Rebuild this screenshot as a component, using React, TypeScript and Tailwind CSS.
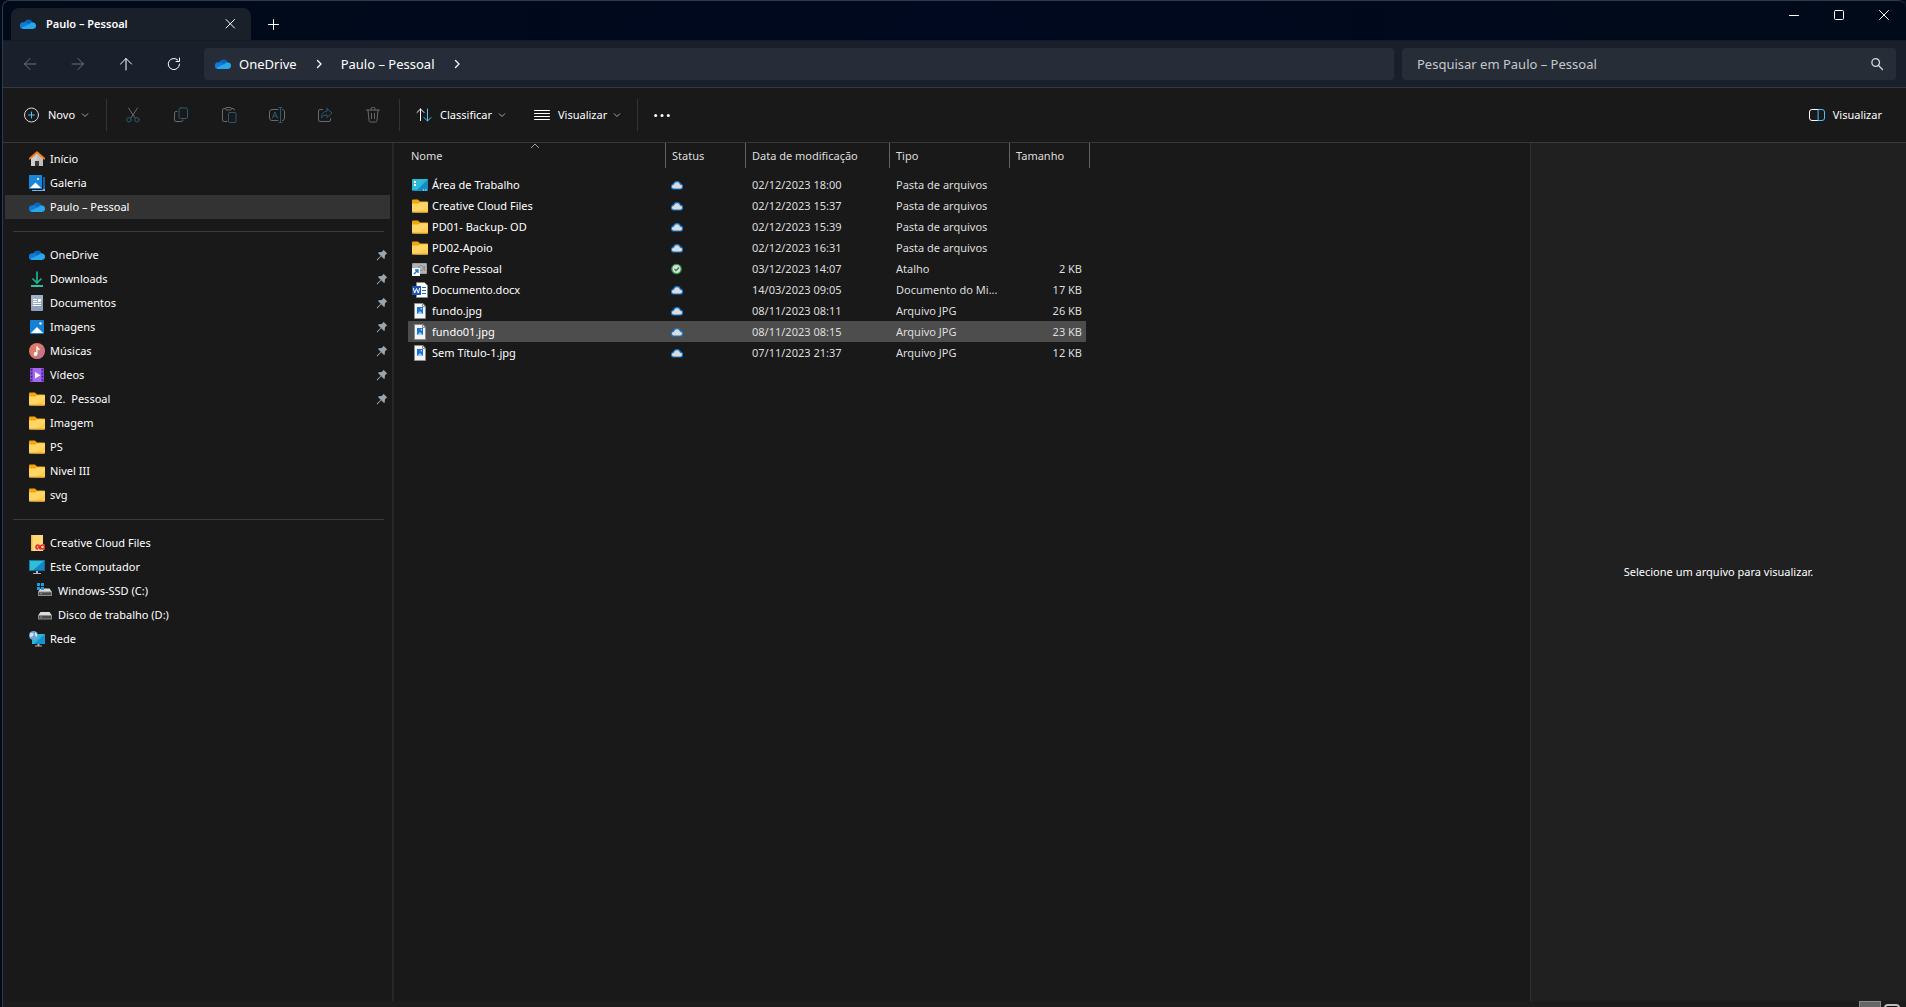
import type { ReactNode } from 'react'

type IconName =
  | 'home' | 'gallery' | 'cloud' | 'download' | 'document' | 'image' | 'music' | 'video'
  | 'folder' | 'creative' | 'computer' | 'windrive' | 'drive' | 'network'
  | 'desktop' | 'vault' | 'word' | 'jpg'

interface NavItem {
  label:   string
  icon:    IconName
  pinned?: boolean
  active?: boolean
  child?:  boolean
}

interface FileRow {
  name:     string
  icon:     IconName
  synced?:  boolean // kept on this device, shown with a green tick
  date:     string
  type:     string
  size?:    string
  hovered?: boolean
}

const NAV_GROUPS: NavItem[][] = [
  [
    { label: 'Início', icon: 'home' },
    { label: 'Galeria', icon: 'gallery' },
    { label: 'Paulo – Pessoal', icon: 'cloud', active: true },
  ],
  [
    { label: 'OneDrive', icon: 'cloud', pinned: true },
    { label: 'Downloads', icon: 'download', pinned: true },
    { label: 'Documentos', icon: 'document', pinned: true },
    { label: 'Imagens', icon: 'image', pinned: true },
    { label: 'Músicas', icon: 'music', pinned: true },
    { label: 'Vídeos', icon: 'video', pinned: true },
    { label: '02.  Pessoal', icon: 'folder', pinned: true },
    { label: 'Imagem', icon: 'folder' },
    { label: 'PS', icon: 'folder' },
    { label: 'Nivel III', icon: 'folder' },
    { label: 'svg', icon: 'folder' },
  ],
  [
    { label: 'Creative Cloud Files', icon: 'creative' },
    { label: 'Este Computador', icon: 'computer' },
    { label: 'Windows-SSD (C:)', icon: 'windrive', child: true },
    { label: 'Disco de trabalho (D:)', icon: 'drive', child: true },
    { label: 'Rede', icon: 'network' },
  ],
]

const FILES: FileRow[] = [
  { name: 'Área de Trabalho', icon: 'desktop', date: '02/12/2023 18:00', type: 'Pasta de arquivos' },
  { name: 'Creative Cloud Files', icon: 'folder', date: '02/12/2023 15:37', type: 'Pasta de arquivos' },
  { name: 'PD01- Backup- OD', icon: 'folder', date: '02/12/2023 15:39', type: 'Pasta de arquivos' },
  { name: 'PD02-Apoio', icon: 'folder', date: '02/12/2023 16:31', type: 'Pasta de arquivos' },
  { name: 'Cofre Pessoal', icon: 'vault', synced: true, date: '03/12/2023 14:07', type: 'Atalho', size: '2 KB' },
  { name: 'Documento.docx', icon: 'word', date: '14/03/2023 09:05', type: 'Documento do Mi...', size: '17 KB' },
  { name: 'fundo.jpg', icon: 'jpg', date: '08/11/2023 08:11', type: 'Arquivo JPG', size: '26 KB' },
  { name: 'fundo01.jpg', icon: 'jpg', date: '08/11/2023 08:15', type: 'Arquivo JPG', size: '23 KB', hovered: true },
  { name: 'Sem Título-1.jpg', icon: 'jpg', date: '07/11/2023 21:37', type: 'Arquivo JPG', size: '12 KB' },
]

const ICONS: Record<IconName, ReactNode> = {
  home: (
    <>
      <path d="M2 6.5 8 1.5l6 5V15h-4v-5H6v5H2z" fill="#cfcfcf" />
      <path d="M8 10h2v5h4V8L8 3z" fill="#b4b4b4" opacity=".6" />
      <path d="M6 10h4v5H6z" fill="#3a3a3a" />
      <path d="M.8 7.6 8 1.3l7.2 6.3" fill="none" stroke="#ee7a1a" strokeWidth="2" strokeLinecap="round" strokeLinejoin="round" />
    </>
  ),
  gallery: (
    <>
      <path d="M14 2h2v14H3v-2h11z" fill="#6fb4e8" />
      <path d="M14 2h2v12h-2z" fill="#0f62ad" />
      <path d="M0 0h13v14H0z" fill="#1a86d9" />
      <path d="M1 13 6.5 7.500 12 13z" fill="#fff" />
      <circle cx="9" cy="4" r="1.1" fill="#fff" />
      <path d="M13.500 0v14.500H0" fill="none" stroke="#191919" strokeWidth="1" />
    </>
  ),
  cloud: (
    <>
      <path d="M4.2 6.2A4.5 4.5 0 0 1 12.6 6.6L8 10z" fill="#0a64b9" />
      <path d="M3.4 6.2a3.6 3.6 0 0 1 3.2.4l6.2 4L3 13A3.4 3.4 0 0 1 3.4 6.2z" fill="#0f7bd6" />
      <path d="M8.7 7.9 12 6.5a3.3 3.3 0 0 1 2.2.8L13 10.5z" fill="#1590df" />
      <path d="M1.2 11.8 9.8 8a4 4 0 0 1 3-1.4 3.2 3.2 0 0 1 0 6.5H3.4a3.4 3.4 0 0 1-2.2-1.3z" fill="#28a8ea" />
    </>
  ),
  download: (
    <>
      <path d="M8 .5V11M3.5 7.5 8 12l4.5-4.5" fill="none" stroke="#1fb192" strokeWidth="1.7" />
      <path d="M2 15h12" stroke="#2fc3a2" strokeWidth="2" />
    </>
  ),
  document: (
    <>
      <rect x="2" width="12" height="16" rx="1" fill="#8ea3bb" />
      <path d="M2 0h12v6L2 12z" fill="#a8bacd" opacity=".6" />
      <path d="M4 4.5h4M4 6.5h4M4 8.5h8M4 10.5h8" stroke="#fff" strokeWidth="1.1" />
      <path d="M9 4h3v3H9z" fill="#fff" />
    </>
  ),
  image: (
    <>
      <rect x="1" y="1" width="14" height="14" rx="1" fill="#1681d4" />
      <path d="m2 14 6-6 6 6z" fill="#fff" />
      <circle cx="11.5" cy="4.5" r="1.2" fill="#fff" />
    </>
  ),
  music: (
    <>
      <circle cx="8" cy="8" r="8" fill="#dd7a68" />
      <path d="M14 3a8 8 0 0 1-9 12.5z" fill="#b9719b" opacity=".6" />
      <circle cx="6.5" cy="11" r="1.9" fill="#fff" />
      <path d="M7.3 3.2h1.2c.2 1.5 1.3 1.6 2 2.6v1.7c-.7-.8-1.2-1-2-1.1V11H7.3z" fill="#fff" />
    </>
  ),
  video: (
    <>
      <rect x="1" y="1" width="14" height="14" rx="1" fill="#8a4fe0" />
      <path d="M4 1h8v14H4z" fill="#a468ef" />
      <path d="M1.7 3h1.6M1.7 6.3h1.6M1.7 9.7h1.6M1.7 13h1.6M12.7 3h1.6M12.7 6.3h1.6M12.7 9.7h1.6M12.7 13h1.6" stroke="#3d1d79" strokeWidth="1.7" />
      <path d="M6 5v6.500l5.500-3.200z" fill="#fff" />
    </>
  ),
  folder: (
    <>
      <path d="M0 2.5A1 1 0 0 1 1 1.5h5l2 2h7a1 1 0 0 1 1 1V7H0z" fill="#f0a60d" />
      <path d="M0 5.5h6.5L8 4.200h8v9.300a1 1 0 0 1-1 1H1a1 1 0 0 1-1-1z" fill="#ffd568" />
      <path d="M16 8v5.500a1 1 0 0 1-1 1H4z" fill="#ffc93f" opacity=".6" />
      <path d="M.3 14.100h15.400" stroke="#d9a02a" strokeWidth=".9" />
    </>
  ),
  creative: (
    <>
      <path d="M2 0h12v16H2z" fill="#ffd977" />
      <path d="M2 0h1.500v16H2z" fill="#f0b840" />
      <rect x="6" y="8.500" width="10" height="7" rx="3.500" fill="#ffd0a0" />
      <path d="M9 14a2 2 0 0 1 0-4c1.700 0 2.300 4 4.500 4a2 2 0 0 0 0-4c-1.200 0-1.800.8-2.500 1.600M8.700 12c1 0 1.300 2 3 2" fill="none" stroke="#e3271b" strokeWidth="1.500" />
    </>
  ),
  computer: (
    <>
      <path d="M0 1h16v11H0z" fill="#1387c4" />
      <path d="M0 1h16L3 12H0z" fill="#30bdd6" />
      <path d="M.4 1.4h15.200v10.200H.4z" fill="none" stroke="#0d5e93" strokeWidth=".8" />
      <path d="M7 12h2v2H7zM4 14h8v1H4z" fill="#b5b5b5" />
    </>
  ),
  windrive: (
    <>
      <path d="M3.500 5.500h9L15 9H1z" fill="#dcdcdc" />
      <path d="M1 8.500h14V13H1z" fill="#8b8b8b" />
      <path d="M2 9.500h12V12H2z" fill="#4b4b4b" />
      <path d="M3.500 10.700h1.300" stroke="#4de04d" strokeWidth="1.200" />
      <path d="M0 0h3v3H0zM4 0h3v3H4zM0 4h3v3H0zM4 4h3v3H4z" fill="#1e9de8" />
    </>
  ),
  drive: (
    <>
      <path d="M3.500 5h9L15 8.500H1z" fill="#dcdcdc" />
      <path d="M1 8h14v4.500H1z" fill="#8b8b8b" />
      <path d="M2 9h12v2.500H2z" fill="#4b4b4b" />
      <path d="M3.500 10.200h1.300" stroke="#4de04d" strokeWidth="1.200" />
    </>
  ),
  network: (
    <>
      <path d="M3 3h13v10H3z" fill="#1592cc" />
      <path d="M3 3h13L5 13H3z" fill="#2cb4d8" />
      <path d="M8.500 13h2v1.500h-2zM6 14.500h7v1H6z" fill="#b5b5b5" />
      <circle cx="4.500" cy="4.500" r="4.500" fill="#6ea5d2" />
      <path d="M1 2.500C3 1 5 2 4.500 4S2 5 1.500 7.500M6 1c2 1 2.500 3 2 5-1-.5-2-1-2-2.500z" fill="#cfe6f6" />
    </>
  ),
  desktop: (
    <>
      <rect y="2" width="16" height="12" rx="1" fill="#138cc5" />
      <path d="M1 2h15L5 13H0V3z" fill="#2cbbd5" />
      <path d="M2 4h2v2H2zM2 7h2v2H2z" fill="#fff" />
      <path d="M11 13h1.200M13.200 13h1.200" stroke="#fff" strokeWidth="1" />
    </>
  ),
  vault: (
    <>
      <rect y="2" width="15" height="11" rx="1" fill="#9d9d9d" />
      <path d="M1 3h13v9H1z" fill="#b3b3b3" />
      <circle cx="9" cy="7" r="2.500" fill="none" stroke="#8a8a8a" />
      <path d="M12.500 5v5" stroke="#8a8a8a" />
      <path d="M0 7h8v8H0z" fill="#fff" />
      <path d="m2 13 3.500-3.500M3 9h3v3" fill="none" stroke="#0f78c8" strokeWidth="1.300" />
    </>
  ),
  word: (
    <>
      <path d="M4.500.5h8l3 3v12h-11z" fill="#fff" stroke="#8a8a8a" strokeWidth=".8" />
      <path d="M10 5.500h4M10 8.500h4M10 11.500h4" stroke="#2c62b8" />
      <path d="M0 4h9v9H0z" fill="#1b56b5" />
      <path d="m1.300 6 1.400 5 1.800-4.500L6.300 11l1.400-5" fill="none" stroke="#fff" />
    </>
  ),
  jpg: (
    <>
      <path d="M2.500.5h8.300l2.700 2.700v12.300h-11z" fill="#f4f4f4" stroke="#8e8e8e" />
      <path d="M10.500.5v3h3" fill="none" stroke="#8e8e8e" />
      <path d="M5 4h6v7H5z" fill="#1e73cf" />
      <path d="m5 11 3-3 3 3z" fill="#8fd0ff" />
      <circle cx="9.300" cy="5.800" r=".7" fill="#d6efff" />
    </>
  ),
}

function Icon({ name }: { name: IconName }) {
  return (
    <svg viewBox="0 0 16 16" className="size-4 shrink-0" aria-hidden="true">
      {ICONS[name]}
    </svg>
  )
}

// Thin line glyph used by the bars; children are stroked with the text colour.
function Line({ children }: { children: ReactNode }) {
  return (
    <svg
      viewBox="0 0 16 16"
      className="size-4 shrink-0"
      fill="none"
      stroke="currentColor"
      strokeLinecap="round"
      strokeLinejoin="round"
      aria-hidden="true"
    >
      {children}
    </svg>
  )
}

function Chevron() {
  return (
    <svg viewBox="0 0 8 8" className="size-2 shrink-0 text-[#a5a5a5]" fill="none" stroke="currentColor" aria-hidden="true">
      <path d="m1 2.500 3 3 3-3" />
    </svg>
  )
}

function Pin() {
  return (
    <svg viewBox="0 0 12 12" className="size-3 shrink-0" aria-hidden="true">
      <path d="M7.500.8 11.200 4.500 10.300 5 9 6.300 8.800 9.200 8 10 5.200 7.300 1.500 11.200H.8v-.7L4.700 6.800 2 4l.8-.8 2.900-.2L7 1.700z" fill="#9aa4ad" />
    </svg>
  )
}

function CloudStatus() {
  return (
    <svg viewBox="0 0 12 10" className="h-[10px] w-3" role="img" aria-label="Disponível online">
      <path d="M3 9a2.400 2.400 0 0 1-.4-4.800 3.500 3.500 0 0 1 6.800 0A2.400 2.400 0 0 1 9 9z" fill="#dcdcdc" stroke="#1479d0" strokeWidth="1.200" />
    </svg>
  )
}

function SyncedStatus() {
  return (
    <svg viewBox="0 0 12 12" className="size-3" role="img" aria-label="Disponível neste dispositivo">
      <circle cx="5.500" cy="6" r="4.700" fill="#dcdcdc" stroke="#2f9a48" strokeWidth="1.300" />
      <path d="m3.500 6 1.500 1.600L8 4.500" fill="none" stroke="#2a7f3d" strokeWidth="1.300" />
    </svg>
  )
}

function TitleBar() {
  return (
    <header className="flex h-[39px] items-end bg-linear-to-r from-[#000a19] via-[#00091f] to-[#000a19] pl-2">
      <div className="flex h-8 w-60 items-center rounded-t-lg bg-[#1a2029] pr-[13px] pl-[9px] font-semibold text-white">
        <Icon name="cloud" />
        <span className="ml-2.5 flex-1">Paulo – Pessoal</span>
        <button type="button" aria-label="Fechar guia">
          <Line><path d="m4 3.500 8.500 8.500m0-8.500L4 12" /></Line>
        </button>
      </div>
      <button type="button" aria-label="Nova guia" className="ml-3.5 flex h-8 items-center text-white">
        <Line><path d="M8.500 3.500v10M3.500 8.500h10" /></Line>
      </button>
      <div className="ml-auto flex self-start text-white">
        <button type="button" aria-label="Minimizar" className="flex h-7 w-[45px] items-center justify-center">
          <Line><path d="M3.500 8.500h9" /></Line>
        </button>
        <button type="button" aria-label="Maximizar" className="flex h-7 w-[45px] items-center justify-center">
          <Line><rect x="3.500" y="3.500" width="9" height="9" rx="1" /></Line>
        </button>
        <button type="button" aria-label="Fechar" className="flex h-7 w-[45px] items-center justify-center">
          <Line><path d="m3.500 3.500 9 9m0-9-9 9" /></Line>
        </button>
      </div>
    </header>
  )
}

function AddressBar() {
  return (
    <nav className="flex h-[47px] items-center border-t border-[#141a24] bg-[#1a202b] pr-2.5 pl-[19px] text-[13px]">
      <div className="flex shrink-0 gap-8 text-white">
        <button type="button" aria-label="Voltar" disabled className="text-[#6c717a]">
          <Line><path d="M14 8H2.500M8 2.500 2.500 8 8 13.500" /></Line>
        </button>
        <button type="button" aria-label="Avançar" disabled className="text-[#6c717a]">
          <Line><path d="M2 8h11.500M8 2.500 13.500 8 8 13.500" /></Line>
        </button>
        <button type="button" aria-label="Acima">
          <Line><path d="M8 14V2.500M2.500 8 8 2.500 13.500 8" /></Line>
        </button>
        <button type="button" aria-label="Atualizar">
          <Line><path d="M13.500 8a5.600 5.600 0 1 1-1.700-4M13.500 2v3.500H10" /></Line>
        </button>
      </div>
      <div className="ml-[22px] flex h-8 flex-1 items-center rounded-sm bg-[#262d38] pl-[11px] text-white">
        <Icon name="cloud" />
        <a href="#onedrive" className="ml-2">OneDrive</a>
        <span className="mx-3.5"><Line><path d="m6.500 4.500 3.500 3.500-3.500 3.500" strokeWidth="1.300" /></Line></span>
        <a href="#pessoal">Paulo – Pessoal</a>
        <span className="mx-3.5"><Line><path d="m6.500 4.500 3.500 3.500-3.500 3.500" strokeWidth="1.300" /></Line></span>
      </div>
      <label className="ml-2 flex h-8 w-[494px] items-center rounded-sm bg-[#272d37] pr-[11px] pl-[15px]">
        <input
          type="search"
          aria-label="Pesquisar"
          placeholder="Pesquisar em Paulo – Pessoal"
          className="min-w-0 flex-1 bg-transparent text-white outline-none placeholder:text-[#c6c8cc]"
        />
        <span className="text-[#d8d8d8]">
          <Line><path d="M10.500 6.500a3.800 3.800 0 1 1-7.600 0 3.800 3.800 0 0 1 7.600 0zM9.500 9.500l4 4" strokeWidth="1.300" /></Line>
        </span>
      </label>
    </nav>
  )
}

const ACCENT = '#4cc2ff'
const DIM = '#285a73'

function Toolbar() {
  return (
    <div className="flex h-14 items-center border-y border-[#383838] bg-[#191919] pr-6 pl-5 text-white">
      <button type="button" aria-haspopup="menu" className="flex items-center">
        <Line>
          <circle cx="8.500" cy="8" r="7" stroke="#d8d8d8" />
          <path d="M8.500 5v6M5.500 8h6" stroke={ACCENT} />
        </Line>
        <span className="mr-1.5 ml-[9px]">Novo</span>
        <Chevron />
      </button>
      <div className="ml-[17px] h-8 w-px bg-[#333333]" />
      <div className="flex gap-8 px-[18px] text-[#6a6a6a]">
        <button type="button" aria-label="Recortar" disabled>
          <Line>
            <path d="m3.500 1 6.700 10M12.500 1 5.800 11" />
            <g stroke={DIM}><circle cx="4" cy="12.800" r="2.200" /><circle cx="12" cy="12.800" r="2.200" /></g>
          </Line>
        </button>
        <button type="button" aria-label="Copiar" disabled>
          <Line>
            <path d="M4 4.500H3a1.500 1.500 0 0 0-1.500 1.500v7A1.500 1.500 0 0 0 3 14.500h5.500A1.500 1.500 0 0 0 10 13" />
            <rect x="6" y="1" width="8.500" height="10.500" rx="1.500" stroke={DIM} />
          </Line>
        </button>
        <button type="button" aria-label="Colar" disabled>
          <Line>
            <path d="M6 14.500H3A1.500 1.500 0 0 1 1.500 13V3A1.500 1.500 0 0 1 3 1.500h1.500m6 0H12A1.500 1.500 0 0 1 13.500 3" />
            <rect x="4.500" y=".5" width="6" height="2.500" rx="1.200" />
            <rect x="7.500" y="5.500" width="7.500" height="10" rx="1" stroke={DIM} />
          </Line>
        </button>
        <button type="button" aria-label="Renomear" disabled>
          <Line>
            <path d="M9 13.500H3A2.500 2.500 0 0 1 .5 11V5A2.500 2.500 0 0 1 3 2.500h6m4.500 0a2 2 0 0 1 2 2.500v6a2 2 0 0 1-2 2.500" />
            <path d="M3.500 11 6 5l2.500 6M4.300 9h3.400M11.500.5v15M10 .5h3m-3 15h3" stroke={DIM} />
          </Line>
        </button>
        <button type="button" aria-label="Compartilhar" disabled>
          <Line>
            <path d="M5.500 2.500H3A1.500 1.500 0 0 0 1.500 4v9A1.500 1.500 0 0 0 3 14.500h9a1.500 1.500 0 0 0 1.500-1.500v-1.500" />
            <path d="M10 1.500 15 6l-5 4.500V8C7 8 5.500 9 4.500 11c0-4 2-6.700 5.500-7z" stroke={DIM} />
          </Line>
        </button>
        <button type="button" aria-label="Excluir" disabled>
          <Line><path d="M1.500 3h13M6 3V2a2 2 0 0 1 4 0v1M3 3l1 10.500a1.500 1.500 0 0 0 1.500 1.500h5a1.500 1.500 0 0 0 1.500-1.500L13 3M6.500 6.500v5m3-5v5" /></Line>
        </button>
      </div>
      <div className="h-8 w-px bg-[#333333]" />
      <button type="button" aria-haspopup="menu" className="ml-4 flex items-center">
        <Line>
          <path d="M4.500 13.500V2M1 5.500 4.500 2 8 5.500" />
          <path d="M11.500 2v12M8 10.500l3.500 3.500 3.500-3.500" stroke={ACCENT} />
        </Line>
        <span className="mr-1.5 ml-2">Classificar</span>
        <Chevron />
      </button>
      <button type="button" aria-haspopup="menu" className="ml-7 flex items-center">
        <Line><path d="M.5 3.500h15M.5 6.500h15M.5 9.500h15M.5 12.500h15" /></Line>
        <span className="mr-1.5 ml-2">Visualizar</span>
        <Chevron />
      </button>
      <div className="ml-4 h-8 w-px bg-[#333333]" />
      <button type="button" aria-label="Ver mais" className="ml-4">
        <svg viewBox="0 0 16 16" className="size-4" fill="currentColor" aria-hidden="true">
          <circle cx="1.700" cy="8.500" r="1.500" />
          <circle cx="8" cy="8.500" r="1.500" />
          <circle cx="14.300" cy="8.500" r="1.500" />
        </svg>
      </button>
      <button type="button" className="ml-auto flex items-center gap-2">
        <Line>
          <path d="M9.500 13.500H3A2.500 2.500 0 0 1 .5 11V5A2.500 2.500 0 0 1 3 2.500h6.500" />
          <path d="M9.500 2.500H13A2.500 2.500 0 0 1 15.500 5v6a2.500 2.500 0 0 1-2.500 2.500H9.500z" stroke={ACCENT} />
        </Line>
        Visualizar
      </button>
    </div>
  )
}

function Sidebar() {
  return (
    <aside className="w-[391px] shrink-0 border-r-2 border-[#272727] pt-1 text-white">
      {NAV_GROUPS.map((group, i) => (
        <div key={i}>
          {i > 0 && <hr className="mt-3 mr-2 mb-[11px] ml-2.5 border-[#3a3a3a]" />}
          <ul className="mx-0.5">
            {group.map(item => (
              <li key={item.label}>
                <a
                  href="#"
                  aria-current={item.active ? 'page' : undefined}
                  className={`flex h-6 items-center gap-[5px] pr-0.5 whitespace-pre ${item.child ? 'pl-8' : 'pl-6'} ${item.active ? 'bg-[#333333]' : ''}`}
                >
                  <Icon name={item.icon} />
                  <span className="flex-1">{item.label}</span>
                  {item.pinned && <Pin />}
                </a>
              </li>
            ))}
          </ul>
        </div>
      ))}
    </aside>
  )
}

function FileTable() {
  const columns = ['Nome', 'Status', 'Data de modificação', 'Tipo', 'Tamanho']
  return (
    <main className="min-w-0 flex-1 pl-3.5">
      <table className="w-[682px] table-fixed border-separate border-spacing-0 text-left text-[#dedede]">
        <colgroup>
          <col className="w-[258px]" />
          <col className="w-20" />
          <col className="w-36" />
          <col className="w-30" />
          <col className="w-20" />
        </colgroup>
        <thead>
          <tr>
            {columns.map((label, i) => (
              <th key={label} scope="col" aria-sort={i === 0 ? 'ascending' : undefined} className="h-[31px] p-0 align-top font-normal">
                <div className={`relative flex h-[25px] items-center border-r border-[#636363] ${i === 0 ? 'pl-[3px]' : 'pl-1.5'}`}>
                  {label}
                  {i === 0 && (
                    <svg viewBox="0 0 10 6" className="absolute top-0 left-[122px] h-1.5 w-2.5" fill="none" stroke="#a0a0a0" aria-hidden="true">
                      <path d="m1 5 4-4 4 4" />
                    </svg>
                  )}
                </div>
              </th>
            ))}
          </tr>
        </thead>
        <tbody>
          {FILES.map(file => (
            <tr key={file.name} className={`*:h-[21px] *:p-0 ${file.hovered ? '*:bg-[#4d4d4d]' : ''}`}>
              <td>
                <div className="flex items-center gap-1 pl-1 text-white">
                  <Icon name={file.icon} />
                  {file.name}
                </div>
              </td>
              <td>
                <div className="pl-[5px]">{file.synced ? <SyncedStatus /> : <CloudStatus />}</div>
              </td>
              <td><div className="pl-1.5">{file.date}</div></td>
              <td><div className="pl-1.5">{file.type}</div></td>
              <td className="border-r-4 border-transparent bg-clip-padding text-right">
                <div className="pr-1">{file.size}</div>
              </td>
            </tr>
          ))}
        </tbody>
      </table>
    </main>
  )
}

function StatusBar() {
  return (
    <footer className="flex h-1.5 shrink-0 items-start justify-end gap-[3px] overflow-hidden bg-[#1c1c1c] pr-1.5">
      <button type="button" aria-label="Exibir detalhes" className="h-5 w-[22px] border border-[#8a8a8a] bg-[#666666] px-[3px] pt-[3px]">
        <span className="block h-3 rounded-sm bg-[#d0d0d0]" />
      </button>
      <button type="button" aria-label="Exibir miniaturas" className="mt-[3px] h-4 w-4 rounded-sm border-2 border-[#c0c0c0] bg-[#0a1016]" />
    </footer>
  )
}

export default function App() {
  return (
    <div className="h-screen overflow-hidden bg-[#000c1c] pl-0.5 font-['Noto_Sans',sans-serif] text-[11px] leading-4">
      <div className="flex h-full flex-col overflow-hidden rounded-t-lg border-t border-l border-[#333a45] bg-[#191919]">
        <TitleBar />
        <AddressBar />
        <Toolbar />
        <div className="flex min-h-0 flex-1">
          <Sidebar />
          <FileTable />
          <section aria-label="Visualização" className="flex w-[376px] shrink-0 items-center justify-center border-l border-[#303030] bg-[#202020] text-white">
            Selecione um arquivo para visualizar.
          </section>
        </div>
        <StatusBar />
      </div>
    </div>
  )
}
